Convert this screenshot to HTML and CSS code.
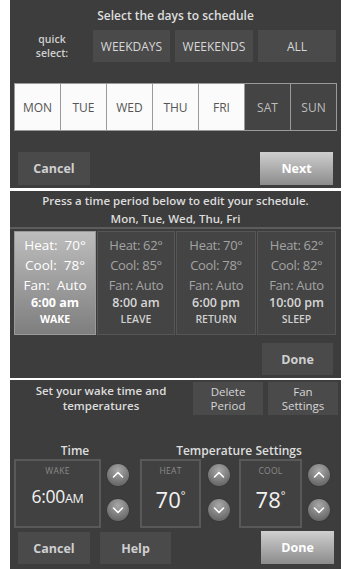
FILE: index.html
```html
<!DOCTYPE html>
<html>
<head>
<meta charset="utf-8">
<link rel="stylesheet" href="styles.css">
</head>
<body>
<div class="page">
  <section class="panel p1">
    <div class="p1-title">Select the days to schedule</div>
    <div class="quick">
      <div class="quick-label"><div>quick</div><div>select:</div></div>
      <div class="btn">WEEKDAYS</div>
      <div class="btn">WEEKENDS</div>
      <div class="btn">ALL</div>
    </div>
    <div class="days">
      <div class="day on">MON</div>
      <div class="day on">TUE</div>
      <div class="day on">WED</div>
      <div class="day on">THU</div>
      <div class="day on">FRI</div>
      <div class="day">SAT</div>
      <div class="day">SUN</div>
    </div>
    <div class="actions">
      <div class="btn act">Cancel</div>
      <div class="btn act primary">Next</div>
    </div>
  </section>

  <section class="panel p2">
    <div class="p2-head">
      <div>Press a time period below to edit your schedule.</div>
      <div>Mon, Tue, Wed, Thu, Fri</div>
    </div>
    <div class="periods">
      <div class="period sel">
        <div class="pl">Heat:&nbsp; 70°</div>
        <div class="pl">Cool:&nbsp; 78°</div>
        <div class="pl">Fan:&nbsp; Auto</div>
        <div class="pt">6:00 am</div>
        <div class="pn">WAKE</div>
      </div>
      <div class="period">
        <div class="pl">Heat: 62°</div>
        <div class="pl">Cool: 85°</div>
        <div class="pl">Fan: Auto</div>
        <div class="pt">8:00 am</div>
        <div class="pn">LEAVE</div>
      </div>
      <div class="period">
        <div class="pl">Heat: 70°</div>
        <div class="pl">Cool: 78°</div>
        <div class="pl">Fan: Auto</div>
        <div class="pt">6:00 pm</div>
        <div class="pn">RETURN</div>
      </div>
      <div class="period">
        <div class="pl">Heat: 62°</div>
        <div class="pl">Cool: 82°</div>
        <div class="pl">Fan: Auto</div>
        <div class="pt">10:00 pm</div>
        <div class="pn">SLEEP</div>
      </div>
    </div>
    <div class="p2-foot">
      <div class="btn act">Done</div>
    </div>
  </section>

  <section class="panel p3">
    <div class="p3-head">
      <div class="p3-title">Set your wake time and<br>temperatures</div>
      <div class="btn two">Delete<br>Period</div>
      <div class="btn two">Fan<br>Settings</div>
    </div>
    <div class="labels">
      <div class="lab-time">Time</div>
      <div class="lab-temp">Temperature Settings</div>
    </div>
    <div class="controls">
      <div class="box box-time">
        <div class="box-label">WAKE</div>
        <div class="box-val time-val">6:00<span class="ampm">AM</span></div>
      </div>
      <div class="arrows">
        <div class="arrow"><svg viewBox="0 0 22 22" width="22" height="22"><polyline points="6.5,13 11,8.5 15.5,13" fill="none" stroke="#fff" stroke-width="1.6" stroke-linecap="round" stroke-linejoin="round"/></svg></div>
        <div class="arrow"><svg viewBox="0 0 22 22" width="22" height="22"><polyline points="6.5,9 11,13.5 15.5,9" fill="none" stroke="#fff" stroke-width="1.6" stroke-linecap="round" stroke-linejoin="round"/></svg></div>
      </div>
      <div class="box box-heat">
        <div class="box-label">HEAT</div>
        <div class="box-val temp-val">70<span class="deg">°</span></div>
      </div>
      <div class="arrows">
        <div class="arrow"><svg viewBox="0 0 22 22" width="22" height="22"><polyline points="6.5,13 11,8.5 15.5,13" fill="none" stroke="#fff" stroke-width="1.6" stroke-linecap="round" stroke-linejoin="round"/></svg></div>
        <div class="arrow"><svg viewBox="0 0 22 22" width="22" height="22"><polyline points="6.5,9 11,13.5 15.5,9" fill="none" stroke="#fff" stroke-width="1.6" stroke-linecap="round" stroke-linejoin="round"/></svg></div>
      </div>
      <div class="box box-cool">
        <div class="box-label">COOL</div>
        <div class="box-val temp-val">78<span class="deg">°</span></div>
      </div>
      <div class="arrows">
        <div class="arrow"><svg viewBox="0 0 22 22" width="22" height="22"><polyline points="6.5,13 11,8.5 15.5,13" fill="none" stroke="#fff" stroke-width="1.6" stroke-linecap="round" stroke-linejoin="round"/></svg></div>
        <div class="arrow"><svg viewBox="0 0 22 22" width="22" height="22"><polyline points="6.5,9 11,13.5 15.5,9" fill="none" stroke="#fff" stroke-width="1.6" stroke-linecap="round" stroke-linejoin="round"/></svg></div>
      </div>
    </div>
    <div class="p3-foot">
      <div class="btn act">Cancel</div>
      <div class="btn act help">Help</div>
      <div class="btn act primary done3">Done</div>
    </div>
  </section>
</div>
</body>
</html>
```

FILE: styles.css
```css
html, body {
  margin: 0;
  padding: 0;
  background: #ffffff;
}
body {
  font-family: "Open Sans", "Noto Sans", sans-serif;
  color: #dcdcdc;
}
.page {
  padding-left: 10px;
  width: 331px;
  display: flex;
  flex-direction: column;
}
.panel {
  background: #3d3d3d;
  box-sizing: border-box;
}
.btn {
  background: #4a4a4a;
  color: #d8d8d8;
  display: flex;
  align-items: center;
  justify-content: center;
  font-size: 12px;
  font-weight: 500;
  box-sizing: border-box;
}
.act {
  width: 72px;
  height: 33px;
  font-size: 12.5px;
  font-weight: 700;
  color: #cfcfcf;
}
.primary {
  background: linear-gradient(#cfcfcf, #8c8c8c);
  color: #ffffff;
  width: 73px;
}

/* Panel 1 */
.p1 {
  height: 188px;
  padding: 0 4px;
  display: flex;
  flex-direction: column;
}
.p1-title {
  height: 30px;
  display: flex;
  align-items: center;
  justify-content: center;
  font-size: 12px;
  font-weight: 600;
  color: #dedede;
}
.quick {
  height: 32px;
  display: grid;
  grid-template-columns: 74px 77px 78px 78px;
  column-gap: 5px;
}
.quick-label {
  display: flex;
  flex-direction: column;
  align-items: center;
  justify-content: center;
  text-align: center;
  font-size: 10.5px;
  font-weight: 600;
  line-height: 14px;
  color: #d0d0d0;
  padding-left: 2px;
}
.days {
  margin-top: 21px;
  height: 48px;
  display: grid;
  grid-template-columns: repeat(7, 1fr);
  gap: 1px;
  padding: 1px;
  background: #9a9a9a;
  box-sizing: border-box;
  width: 323px;
}
.day {
  display: flex;
  align-items: center;
  justify-content: center;
  font-size: 12px;
  font-weight: 500;
  background: #444444;
  color: #bdbdbd;
}
.day.on {
  background: #fbfbfb;
  color: #555555;
}
.actions {
  margin-top: 21px;
  display: flex;
  justify-content: space-between;
  padding: 0 4px;
}

/* Panel 2 */
.p2 {
  margin-top: 3px;
  height: 187px;
  display: flex;
  flex-direction: column;
}
.p2-head {
  height: 38px;
  padding-top: 1px;
  box-sizing: border-box;
  border-bottom: 2px solid #5c5c5c;
  text-align: center;
  font-size: 11.5px;
  font-weight: 600;
  line-height: 18px;
  color: #dcdcdc;
}
.periods {
  margin: 2px 0 0 4px;
  height: 104px;
  display: grid;
  grid-template-columns: 82px 78px 80px 79px;
  column-gap: 1px;
}
.period {
  background: #444444;
  border: 1px solid #565656;
  box-sizing: border-box;
  text-align: center;
  padding-top: 3px;
  color: #a3a3a3;
}
.period.sel {
  background: linear-gradient(#bdbdbd, #7e7e7e);
  border-color: #9a9a9a;
  color: #ffffff;
}
.pl {
  font-size: 13.5px;
  line-height: 20px;
}
.period:not(.sel) .pl {
  font-size: 13px;
  letter-spacing: -0.3px;
}
.pt {
  font-size: 12.5px;
  font-weight: 600;
  line-height: 16px;
  color: #d6d6d6;
}
.pn {
  font-size: 10.5px;
  font-weight: 600;
  line-height: 16px;
  color: #cfcfcf;
}
.sel .pt, .sel .pn {
  color: #ffffff;
  font-weight: 700;
}
.p2-foot {
  margin-top: 8px;
  display: flex;
  justify-content: flex-end;
  padding-right: 8px;
}
.p2-foot .act {
  width: 71px;
  height: 32px;
}

/* Panel 3 */
.p3 {
  margin-top: 2px;
  height: 189px;
  display: flex;
  flex-direction: column;
  padding: 2px 3px 0 4px;
}
.p3-head {
  height: 33px;
  display: grid;
  grid-template-columns: 174px 70px 70px;
  column-gap: 5px;
}
.p3-title {
  text-align: center;
  font-size: 11.5px;
  font-weight: 600;
  line-height: 15px;
  padding-top: 0.5px;
  color: #dcdcdc;
}
.two {
  font-size: 11.5px;
  font-weight: 500;
  line-height: 14px;
  text-align: center;
  color: #d6d6d6;
}
.labels {
  margin-top: 28px;
  height: 16px;
  display: flex;
  font-size: 12px;
  font-weight: 600;
  line-height: 16px;
  color: #dedede;
}
.lab-time {
  width: 122px;
  text-align: center;
}
.lab-temp {
  margin-left: 5px;
  width: 196px;
  text-align: center;
}
.controls {
  height: 69px;
  display: flex;
}
.box {
  border: 2px solid #595959;
  background: #414141;
  box-sizing: border-box;
  height: 69px;
  text-align: center;
  padding-top: 4px;
}
.box-time { width: 87px; }
.box-heat { width: 61px; margin-left: 11px; }
.box-cool { width: 63px; margin-left: 9px; }
.box-label {
  font-size: 8.5px;
  line-height: 12px;
  color: #8a8a8a;
  letter-spacing: 0.3px;
}
.box-val {
  margin-top: 5px;
  line-height: 28px;
  color: #f2f2f2;
}
.time-val {
  font-size: 17.5px;
  letter-spacing: -0.3px;
}
.ampm {
  font-size: 12.5px;
}
.temp-val {
  font-size: 22px;
  margin-top: 4px;
}
.deg {
  font-size: 11px;
  vertical-align: 9px;
}
.arrows {
  width: 22px;
  margin-left: 6px;
  padding-top: 5px;
  display: flex;
  flex-direction: column;
  gap: 13px;
}
.box-heat + .arrows { margin-left: 7px; }
.box-cool + .arrows { margin-left: 6px; }
.arrow {
  width: 22px;
  height: 22px;
  border-radius: 50%;
  background: radial-gradient(circle at 50% 30%, #a8a8a8, #6a6a6a 75%);
  box-shadow: 0 0 1px rgba(0,0,0,0.6);
}
.arrow svg {
  display: block;
}
.p3-foot {
  margin-top: 3px;
  display: flex;
  align-items: flex-end;
  padding-left: 4px;
}
.p3-foot .act {
  height: 32px;
}
.help {
  margin-left: 10px;
  width: 71px;
}
.done3 {
  margin-left: auto;
  margin-right: 4px;
  height: 33px !important;
}
```
